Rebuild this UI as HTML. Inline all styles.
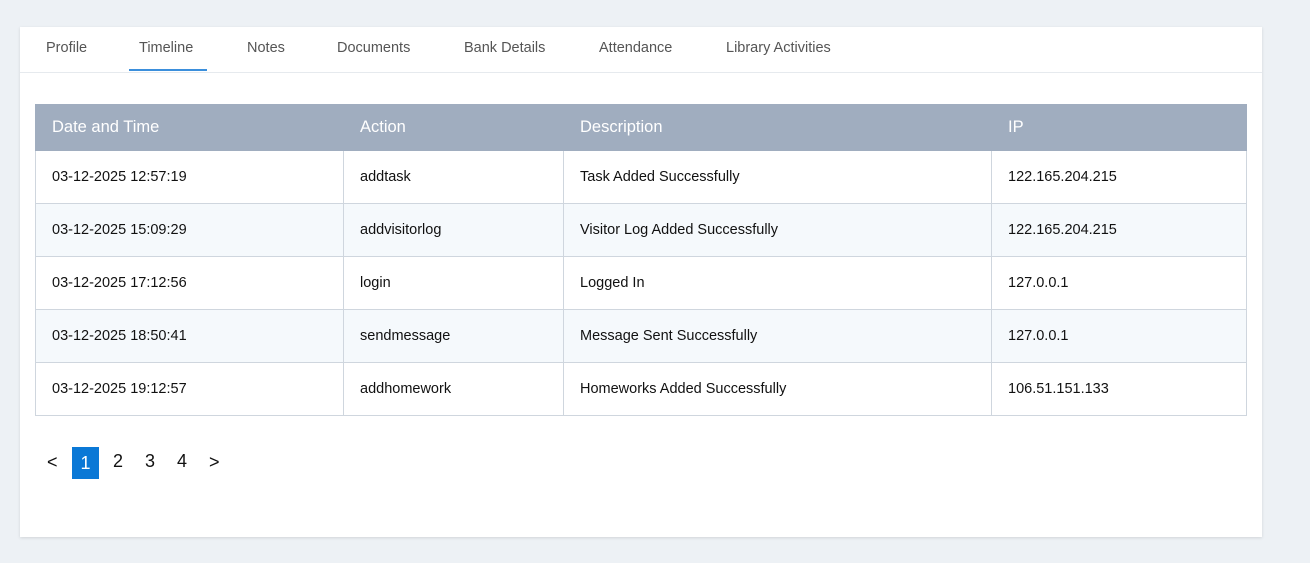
<!DOCTYPE html>
<html><head><style>
body{margin:0;background:#edf1f5;font-family:"Liberation Sans",sans-serif;width:1310px;height:563px;overflow:hidden;position:relative}
.card{position:absolute;left:20px;top:27px;width:1242px;height:510px;background:#fff;box-shadow:0 1px 3px rgba(0,0,0,.12)}
.tabs{position:absolute;left:0;top:0;width:1242px;height:45px;border-bottom:1px solid #e6eaee}
.tab{position:absolute;top:13px;font-size:14.5px;color:#555}
.ul{position:absolute;left:109px;top:42px;width:78px;height:2px;background:#3b8fdc}
table{position:absolute;left:15px;top:77px;border-collapse:collapse;table-layout:fixed;width:1212px;font-size:14.5px;color:#111}
th{background:#a0adbf;color:#fff;font-weight:normal;font-size:16.5px;text-align:left;height:45px;padding:0 0 0 16px;border:1px solid #a0adbf}
td{height:52px;padding:0 0 0 16px;border:1px solid #cfd6de}
tr.a td{background:#f5f9fc}
.pg{position:absolute;top:420px;font-size:18px;color:#111}
.on{position:absolute;left:52px;top:420px;width:27px;height:32px;background:#0a78d6;color:#fff;font-size:18px;text-align:center;line-height:32px}
</style></head><body>
<div class="card">
<div class="tabs">
<span class="tab" style="left:26px">Profile</span>
<span class="tab" style="left:119px">Timeline</span>
<span class="tab" style="left:227px">Notes</span>
<span class="tab" style="left:317px">Documents</span>
<span class="tab" style="left:444px">Bank Details</span>
<span class="tab" style="left:579px">Attendance</span>
<span class="tab" style="left:706px">Library Activities</span>
<div class="ul"></div>
</div>
<table>
<colgroup><col style="width:308px"><col style="width:220px"><col style="width:428px"><col></colgroup>
<tr><th>Date and Time</th><th>Action</th><th>Description</th><th>IP</th></tr>
<tr><td>03-12-2025 12:57:19</td><td>addtask</td><td>Task Added Successfully</td><td>122.165.204.215</td></tr>
<tr class="a"><td>03-12-2025 15:09:29</td><td>addvisitorlog</td><td>Visitor Log Added Successfully</td><td>122.165.204.215</td></tr>
<tr><td>03-12-2025 17:12:56</td><td>login</td><td>Logged In</td><td>127.0.0.1</td></tr>
<tr class="a"><td>03-12-2025 18:50:41</td><td>sendmessage</td><td>Message Sent Successfully</td><td>127.0.0.1</td></tr>
<tr><td>03-12-2025 19:12:57</td><td>addhomework</td><td>Homeworks Added Successfully</td><td>106.51.151.133</td></tr>
</table>
<div class="pg" style="left:27px;top:425px">&lt;</div>
<div class="on">1</div>
<div class="pg" style="left:93px;top:424px">2</div>
<div class="pg" style="left:125px;top:424px">3</div>
<div class="pg" style="left:157px;top:424px">4</div>
<div class="pg" style="left:189px;top:425px">&gt;</div>
</div>
</body></html>
